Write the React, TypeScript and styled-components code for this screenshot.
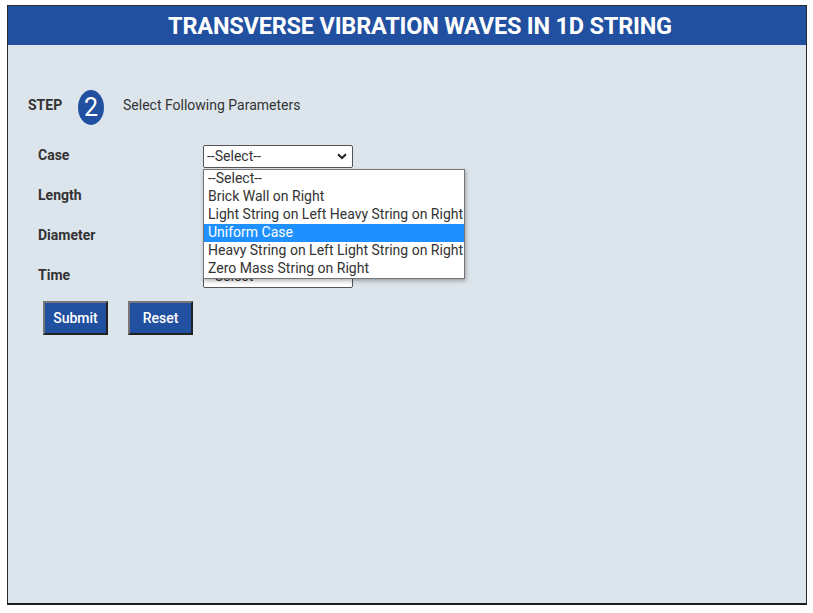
import React from "react";
import styled, { createGlobalStyle } from "styled-components";

const Global = createGlobalStyle`
  html, body { margin: 0; padding: 0; background: #ffffff; }
  body { font-family: Roboto, "Liberation Sans", Arial, sans-serif; color: #333; }
`;

const Frame = styled.div`
  margin: 5px 0 0 7px;
  width: 800px;
  height: 600px;
  box-sizing: border-box;
  border: 1px solid #2b2b2b;
  border-bottom: 2px solid #1a1a1a;
  background: #dde5ec;
  display: flex;
  flex-direction: column;
`;

const Header = styled.header`
  height: 39px;
  background: #2150a0;
  color: #fff;
  display: flex;
  align-items: center;
  justify-content: center;
  padding-left: 26px;
  font-size: 23.5px;
  font-weight: 700;
  letter-spacing: -0.2px;
`;

const Main = styled.main`
  padding: 45px 0 0 20px;
  display: flex;
  flex-direction: column;
`;

const StepRow = styled.div`
  display: flex;
  align-items: center;
  height: 35px;
`;

const StepText = styled.span<{ $bold?: boolean }>`
  font-size: 14px;
  font-weight: ${(p) => (p.$bold ? 700 : 400)};
  width: ${(p) => (p.$bold ? "50px" : "auto")};
  color: #333;
  margin-bottom: 5px;
`;

const StepBadge = styled.span`
  width: 26px;
  height: 35px;
  border-radius: 50%;
  background: #2150a0;
  color: #fff;
  font-size: 25px;
  display: flex;
  align-items: center;
  justify-content: center;
  margin-right: 19px;
`;

const Form = styled.div`
  position: relative;
  margin-top: 11px;
  padding-left: 10px;
  display: grid;
  grid-template-columns: 165px 150px;
  grid-auto-rows: 40px;
  align-items: center;
`;

const Label = styled.label`
  font-size: 14px;
  font-weight: 700;
  color: #333;
  margin-bottom: 2px;
`;

const SelectWrap = styled.div`
  position: relative;
  width: 150px;
  height: 23px;
`;

const Select = styled.select`
  appearance: none;
  width: 150px;
  height: 23px;
  box-sizing: border-box;
  border: 1px solid #555;
  border-radius: 2px;
  background: #fff;
  font-family: Roboto, "Liberation Sans", Arial, sans-serif;
  font-size: 14px;
  color: #333;
  padding: 0 0 0 3px;
`;

const Chevron = styled.svg`
  position: absolute;
  right: 6px;
  top: 8px;
  pointer-events: none;
`;

const ListBox = styled.ul`
  position: absolute;
  left: 175px;
  top: 33px;
  margin: 0;
  padding: 0;
  list-style: none;
  width: 262px;
  box-sizing: border-box;
  border: 1px solid #767676;
  background: #fff;
  box-shadow: 1px 2px 4px rgba(0, 0, 0, 0.3);
  z-index: 5;
`;

const Option = styled.li<{ $active?: boolean }>`
  height: 18px;
  line-height: 17px;
  padding-left: 4px;
  font-size: 14px;
  white-space: nowrap;
  color: ${(p) => (p.$active ? "#fff" : "#333")};
  background: ${(p) => (p.$active ? "#1e90ff" : "transparent")};
`;

const Buttons = styled.div`
  display: flex;
  gap: 20px;
  margin-top: 5px;
  padding-left: 15px;
`;

const Button = styled.button`
  height: 34px;
  width: 65px;
  padding: 0 0 1px;
  box-sizing: border-box;
  background: #2150a0;
  color: #fff;
  font-family: Roboto, "Liberation Sans", Arial, sans-serif;
  font-size: 14px;
  font-weight: 500;
  border: 2px solid;
  border-color: #777 #222 #222 #777;
  border-radius: 0;
`;

const ChevronIcon = () => (
  <Chevron width="10" height="7" viewBox="0 0 10 7">
    <path d="M1 1.2 L5 5 L9 1.2" fill="none" stroke="#222" strokeWidth="2" />
  </Chevron>
);

const Field = ({ label }: { label: string }) => (
  <>
    <Label>{label}</Label>
    <SelectWrap>
      <Select defaultValue="">
        <option value="">--Select--</option>
      </Select>
      <ChevronIcon />
    </SelectWrap>
  </>
);

const options = [
  "--Select--",
  "Brick Wall on Right",
  "Light String on Left Heavy String on Right",
  "Uniform Case",
  "Heavy String on Left Light String on Right",
  "Zero Mass String on Right",
];

export default function App() {
  return (
    <>
      <Global />
      <Frame>
        <Header>TRANSVERSE VIBRATION WAVES IN 1D STRING</Header>
        <Main>
          <StepRow>
            <StepText $bold>STEP</StepText>
            <StepBadge>2</StepBadge>
            <StepText>Select Following Parameters</StepText>
          </StepRow>
          <Form>
            <Field label="Case" />
            <Field label="Length" />
            <Field label="Diameter" />
            <Field label="Time" />
            <ListBox>
              {options.map((o) => (
                <Option key={o} $active={o === "Uniform Case"}>
                  {o}
                </Option>
              ))}
            </ListBox>
          </Form>
          <Buttons>
            <Button>Submit</Button>
            <Button>Reset</Button>
          </Buttons>
        </Main>
      </Frame>
    </>
  );
}
